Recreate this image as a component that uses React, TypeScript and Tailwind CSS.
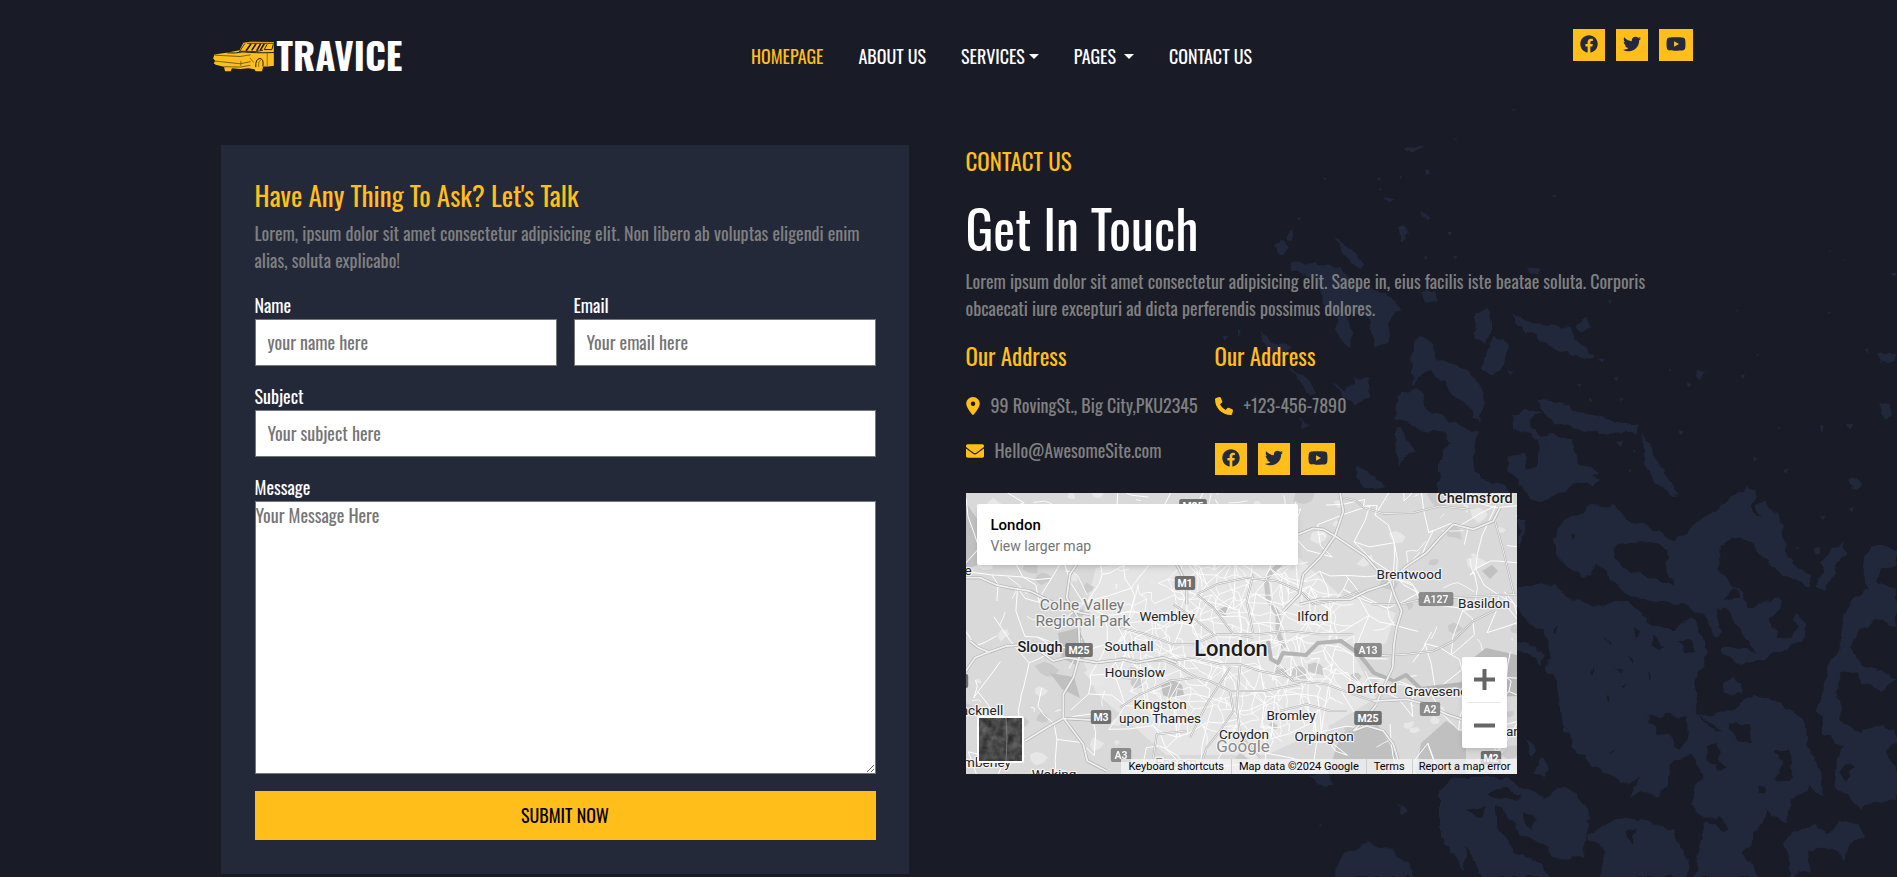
import type { ReactNode } from "react";
import { FaFacebook, FaTwitter, FaYoutube, FaEnvelope } from "react-icons/fa";
import { FaLocationDot, FaPhone } from "react-icons/fa6";

function CarLogo() {
  return (
    <svg viewBox="38 60 184 94" className="h-[31px] w-[61px] shrink-0" aria-hidden="true">
      <path
        fill="#ffbe1a"
        d="M130 65 L150 62 L222 63 V135 L205 137 L190 137 L186 152 H167 L163 146 L145 143 L120 145 L95 143 L91 152 H74 L71 138 L46 132 L40 128 L44 120 L38 113 L42 101 L78 96 L118 88 Z"
      />
      <g fill="none" stroke="#191b27" strokeLinecap="round">
        <path strokeWidth="2.5" d="M134 68 L118 92 M142 67 H222 M118 91 L168 92 L188 88" />
        <path strokeWidth="5" d="M152 70 L139 88 M167 70 L156 87 M181 70 L171 88 M192 70 L182 86" />
        <path strokeWidth="3" d="M201 71 L193 86 H216 L220 71" />
        <path strokeWidth="3" d="M82 96 Q105 98 128 93 Q165 97 222 95" />
        <path strokeWidth="1.8" d="M44 103 L120 107 L150 102 M45 121 L120 129 L150 123 M72 138 L120 139 L150 134" />
        <path strokeWidth="3" d="M167 138 Q166 114 180 113 Q192 114 189 136" />
        <path strokeWidth="1.5" d="M176 137 Q174 121 181 119 M202 98 V134 M150 112 L160 124 M122 121 V134" />
      </g>
    </svg>
  );
}

function Caret({ className = "" }: { className?: string }) {
  return (
    <svg viewBox="0 0 10 5" className={`h-[5px] w-[10px] ${className}`} aria-hidden="true">
      <path d="M0 0H10L5 5Z" fill="currentColor" />
    </svg>
  );
}

function SocialLinks() {
  const box = "flex h-8 items-center bg-[#ffbe1a] px-[7px] pb-[2px] text-[#242a3b]";
  return (
    <div className="flex gap-[11px]">
      <a href="#facebook" aria-label="Facebook" className={box}>
        <FaFacebook className="h-[18px] w-[18px]" />
      </a>
      <a href="#twitter" aria-label="Twitter" className={box}>
        <FaTwitter className="h-[18px] w-[18px]" />
      </a>
      <a href="#youtube" aria-label="YouTube" className={box}>
        <FaYoutube className="h-[18px] w-[20px]" />
      </a>
    </div>
  );
}

function Header() {
  const link = "flex items-center text-white";
  return (
    <header className="mx-auto grid w-full max-w-[1488px] grid-cols-[11fr_auto_9fr] items-start pt-[29px] pl-2">
      <a href="#home" className="flex h-[54px] items-center text-white">
        <CarLogo />
        <span className="ml-[3px] pb-1 text-[37px] leading-none font-bold">TRAVICE</span>
      </a>
      <nav className="mt-[14px] flex gap-[35px] text-[18px] leading-[27px]">
        <a href="#home" className="flex items-center text-[#ffbe1a]">HOMEPAGE</a>
        <a href="#about" className={link}>ABOUT US</a>
        <a href="#services" className={link}>
          SERVICES <Caret className="ml-1" />
        </a>
        <a href="#pages" className={link}>
          PAGES <Caret className="ml-2" />
        </a>
        <a href="#contact" className={link}>CONTACT US</a>
      </nav>
      <div className="flex justify-end">
        <SocialLinks />
      </div>
    </header>
  );
}

function Splatter() {
  return (
    <svg
      viewBox="0 0 697 877"
      className="pointer-events-none absolute top-0 right-0 h-[877px] w-[697px]"
      aria-hidden="true"
    >
      <defs>
        <filter id="rough" x="-5%" y="-5%" width="110%" height="110%" colorInterpolationFilters="sRGB">
          <feTurbulence type="fractalNoise" baseFrequency="0.08" numOctaves="2" seed="4" result="n" />
          <feDisplacementMap in="SourceGraphic" in2="n" scale="10" xChannelSelector="R" yChannelSelector="G" />
        </filter>
      </defs>
      <g filter="url(#rough)">
        <g transform="translate(0 100) scale(.4444 .4955)" fill="#21283b">
          <path d="M300 278L340 300L368 330L362 342L330 322Z M205 325L260 330L320 335L345 370L400 385L440 400L450 425L425 450L428 490L395 500L375 440L330 420L340 470L345 500L320 490L300 430L270 400L265 360L210 345Z M168 295L182 282L200 298L184 314Z M195 265L208 258L210 280L196 284Z M445 262L458 254L470 272L458 286Z M495 222L518 236L510 243Z M495 386L530 385L535 405L508 412Z M455 98L500 94L490 102L465 104Z M415 196L434 200L424 208Z M133 468L160 485L205 500L170 522L150 500Z M205 540L250 570L262 596L240 590Z M300 570L330 590L345 560L385 560L380 600L350 615L318 595Z M225 640L250 655L235 662Z M622 430L650 418L660 470L640 490L618 480Z M640 520L665 480L690 490L688 530L660 555L636 545Z M475 520L495 475L520 490L530 525L580 535L620 560L645 590L630 655L605 620L580 600L545 570L515 545L490 560L480 580Z M445 600L490 580L510 620L560 650L625 670L615 740L650 790H530L550 740L570 700L545 670L480 660L440 640Z M445 660L470 690L490 710L445 735Z M350 735L420 780L370 790Z" />
          <path d="M705 432L760 450L830 460L845 485L890 515L885 525L820 510L770 485L720 458Z M845 455L870 442L880 458L860 468Z M700 640L730 622L765 630L745 655L770 680L800 675L835 690L850 735L900 750L880 768L830 765L790 795L760 810L730 780L690 745L695 715L725 710L740 745L770 740L765 705L740 665L705 660Z M760 605L800 608L850 630L905 640L985 655L980 675L900 672L850 665L800 650L765 625Z M1000 675L1030 735L1080 800L1030 770L1000 720Z M1115 545L1140 550L1130 565L1118 560Z M1095 572l14 3-8 6z M1460 770l20-5 10 15-22 4z M1520 512l40 5-5 15-20-4z M1530 615l20-5 8 30-14 4z" />
          <path d="M250 1365L290 1350L300 1380L285 1388Z M440 1425l25 5-10 12z M300 1568L320 1525L370 1500L420 1510L470 1540L480 1568Z" />
        </g>
        <g transform="translate(240 440) scale(.3333)" fill="#21283b">
          <path d="M345 290L370 240L430 215L450 195L520 200L550 235L640 265L700 300L740 280L780 240L830 210L920 135L950 170L935 210L960 240L950 200L980 180L1030 260L1035 330L1060 370L1110 400L1110 440L1050 420L990 370L940 310L900 290L840 320L835 380L860 420L910 460L920 500L970 480L1020 475L1020 515L985 535L1020 600L1055 590L1080 560L1050 540L1065 520L1105 555L1100 590L1040 630L960 660L900 675L840 640L840 620L880 620L950 635L900 575L870 520L830 500L850 580L825 590L800 540L750 495L690 490L610 480L540 450L500 400L470 370L440 410L400 390L345 350Z" />
          <path d="M232 440L300 428L350 445L390 475L470 500L560 485L610 520L630 555L700 570L750 530L800 610L795 660L760 730L770 830L880 810L940 760L1020 790L1080 830L1105 870L1110 930L1145 1000L1150 1070L1110 1040L1050 1080L1040 1150L1000 1130L975 1090L985 1110L940 1195L910 1240L960 1311H760L780 1220L800 1140L850 1175L870 1160L820 1130L780 1130L750 1090L755 1050L790 1010L760 950L700 960L690 1000L660 1070L610 1050L570 1080L600 1010L560 1040L520 1010L470 980L410 940L370 870L355 740L320 690L330 640L310 570L270 550L240 520Z" />
          <path d="M0 1050L40 1010L200 1010L240 1040L310 1070L370 1040L420 1070L450 1120L430 1250L370 1265L300 1210L240 1180L190 1110L160 1100L170 1160L220 1230L300 1270L330 1311H130L80 1220L70 1290L40 1240L0 1190Z M440 1190L500 1150L560 1125L640 1150L700 1170L720 1230L750 1260L740 1311H480L490 1230Z" />
          <path d="M1290 315L1350 320L1371 330V370L1320 380L1320 420L1371 460V560L1310 540L1260 570L1230 620L1270 680L1320 690L1371 720L1320 750L1270 730L1250 690L1200 700L1190 760L1210 850L1260 880L1300 860L1371 870V900L1340 930L1371 980V1080L1300 1090L1265 1110L1220 1060L1180 1040L1190 960L1210 920L1150 880L1135 800L1160 700L1200 620L1210 540L1240 470L1285 450L1270 380Z M1170 345L1205 300L1215 340L1190 370L1180 420L1150 455L1130 440L1150 400L1145 360Z M1030 1210L1060 1170L1130 1155L1160 1180L1200 1145L1260 1150L1280 1190L1230 1215L1210 1260L1180 1230L1140 1220L1100 1240L1110 1290L1050 1311L1050 1250Z M845 735L880 705L910 730L905 765L860 760Z" />
          <path d="M232 600L280 620L315 650L305 680L270 640L232 630Z M250 890L290 930L280 950Z M280 1000L305 955L330 990L310 1010Z M232 240L260 240L232 330Z M200 60L225 40L245 90L290 80L320 0H390L410 60L390 100L440 95L480 120L460 135L400 130L340 170L290 190L240 130Z M0 30L40 0H110L70 50L90 110L180 130L230 190H120L60 140L0 100Z M610 0L630 10L660 100L715 175L650 130L615 70Z" />
        </g>
        <g transform="translate(240 440) scale(.3333)" fill="#191b27">
          <path d="M520 325L580 300L650 310L690 330L670 370L700 440L640 420L600 400L560 385L530 360Z M625 830L680 825L740 830L745 900L710 930L690 890L650 880L630 855Z M800 920L830 910L835 960L860 985L830 990L805 960Z M720 600L745 600L760 635L740 640Z M870 850L930 850L935 900L890 900Z M1000 930L1050 930L1060 990L1050 1030L1000 1020L1030 975Z M640 590L670 620L660 630L630 610Z M870 340L920 370L950 410L940 450L905 420L880 380Z M610 500L690 530L740 545L700 570L640 540Z M850 480L900 470L880 440Z M140 1060L200 1040L240 1075L190 1080Z M80 1110L130 1100L125 1130Z M250 1115L280 1130L280 1165L255 1150Z M560 1180L590 1170L575 1215Z M780 830L800 840L850 880L810 860Z M950 1040L985 1040L980 1060L960 1060Z M1200 1000l30-30 10 20-20 30z" />
          <path d="M488 595l22 18-4 6z M520 690l32 0-10 10z M540 735l24 0-14 8z M450 700l16-10-6 20z M570 650l14 14-6 4z M495 770l10 4-2 18z M625 695l8 4-4 22z M395 280l10 4-6 28z M340 570l14-14-8 20z M580 565l26 12-18 16z M515 935l8 0-4 12z M270 650l20 10-4 14z" />
        </g>
      </g>
      <g transform="translate(0 100) scale(.4444 .4955)" fill="#21283b">
        <path d="M700 18l14 1-10 3z M570 78l10-1-6 5z M505 142l10-2 2 9-8 2z M398 158l8-2 0 8z M448 154l7 0-3 6z M402 178l8 1-4 5z M792 192l12-1-7 7z M276 157l10 1-5 4z M218 238l10-1-6 6z M555 265l12 2-5 8z M504 315l9 2-6 7z M568 316l12-2-4 8z M736 338l30 2-5 12-20-3z M918 404l9 0-4 9z M1206 424l6-1-2 5z M1412 428l8 0-3 5z M1414 303l6 0-3 5z M1446 321l5 0-2 5z M1553 350l14-2-3 9z M50 476l14 1-8 9z M85 462l7 3-6 16z M690 545l16 4-8 6z M895 522l16 0-6 8z M930 560l12-1-5 9z M848 572l11 1-5 7z M945 600l9 3-7 6z M875 600l10 6-8 4z M1055 543l6 1-3 5z M1216 555l10-2-4 11z M1496 503l8-2-1 12z M1250 512l8 1-4 4z M1395 656l9 2-5 14z M1452 655l18-2-6 12z M1075 665l14 4-8 8z M1245 720l10 3-9 8z M1312 747l12-4-5 12z M1396 840l12 0-6 8z M935 690l18-2-6 12z M830 470l9 1-5 5z M962 748l9-4-2 8z M975 705l7 4-7 3z M1380 905l14-4 2 14-11 3z M1340 900l8 4-6 4z M1460 825l12-4-5 12z M270 1460l5 3-7 4z M1300 660l7 0-3 6z M120 600l8-5-4 14z" />
      </g>
    </svg>
  );
}

type FieldProps = { id: string; label: string; placeholder: string; type?: string };

function Field({ id, label, placeholder, type = "text" }: FieldProps) {
  return (
    <div className="min-w-0 flex-1">
      <label htmlFor={id} className="block text-white">{label}</label>
      <input
        id={id}
        type={type}
        placeholder={placeholder}
        className="block h-[47px] w-full border border-[#767676] bg-white px-3 pb-[2px] text-gray-900 placeholder:text-[#757575]"
      />
    </div>
  );
}

function ContactForm() {
  return (
    <form className="flex w-full flex-col gap-[17px] bg-[#24293a] pt-[33px] pr-[33px] pb-[34px] pl-[34px] text-[18px] leading-[27px] lg:w-[688px]">
      <div className="pb-px">
        <h2 className="mb-[7px] text-[27px] leading-[35px] text-[#ffbe1a]">Have Any Thing To Ask? Let's Talk</h2>
        <p className="text-[#808080]">
          Lorem, ipsum dolor sit amet consectetur adipisicing elit. Non libero ab voluptas eligendi enim alias, soluta
          explicabo!
        </p>
      </div>
      <div className="flex gap-[17px]">
        <Field id="name" label="Name" placeholder="your name here" />
        <Field id="email" label="Email" placeholder="Your email here" type="email" />
      </div>
      <div className="flex">
        <Field id="subject" label="Subject" placeholder="Your subject here" />
      </div>
      <div>
        <label htmlFor="message" className="block text-white">Message</label>
        <textarea
          id="message"
          placeholder="Your Message Here"
          className="block h-[273px] w-full resize border border-[#767676] bg-white text-gray-900 placeholder:text-[#757575]"
        />
      </div>
      <button type="submit" className="h-[49px] w-full bg-[#ffbe1a] text-black">SUBMIT NOW</button>
    </form>
  );
}

function seeded(seed: number) {
  let s = seed;
  return () => {
    s = (s * 1664525 + 1013904223) % 4294967296;
    return s / 4294967296;
  };
}

/* Jittered lattice of streets; links thin out with distance from the centre. */
function streetPath(step: number, seed: number, radius: number, base: number) {
  const rnd = seeded(seed);
  const cols = Math.ceil(551 / step) + 1;
  const rows = Math.ceil(281 / step) + 1;
  const pts: [number, number][][] = [];
  for (let r = 0; r <= rows; r++) {
    const row: [number, number][] = [];
    for (let c = 0; c <= cols; c++) {
      row.push([c * step + (rnd() - 0.5) * step * 1.1, r * step + (rnd() - 0.5) * step * 1.1]);
    }
    pts.push(row);
  }
  let d = "";
  const link = (a: [number, number], b: [number, number]) => {
    const dist = Math.hypot((a[0] - 265) / 1.25, a[1] - 150);
    const chance = dist < radius ? 0.85 : base;
    const bend = (rnd() - 0.5) * step * 0.4;
    if (rnd() < chance) {
      const mx = (a[0] + b[0]) / 2 + bend;
      const my = (a[1] + b[1]) / 2 - bend;
      d += `M${a[0].toFixed(1)} ${a[1].toFixed(1)}L${mx.toFixed(1)} ${my.toFixed(1)}L${b[0].toFixed(1)} ${b[1].toFixed(1)}`;
    }
  };
  for (let r = 0; r < rows; r++) {
    for (let c = 0; c < cols; c++) {
      link(pts[r][c], pts[r][c + 1]);
      link(pts[r][c], pts[r + 1][c]);
      if (rnd() < 0.25) link(pts[r][c], pts[r + 1][c + 1]);
    }
  }
  return d;
}

function patches(seed: number, count: number, size: number) {
  const rnd = seeded(seed);
  let d = "";
  for (let i = 0; i < count; i++) {
    const x = rnd() * 551;
    const y = rnd() * 281;
    const s = size * (0.4 + rnd());
    for (let k = 0; k < 7; k++) {
      const a = (k / 7) * Math.PI * 2;
      const q = s * (0.5 + rnd() * 0.6);
      d += `${k ? "L" : "M"}${(x + Math.cos(a) * q).toFixed(1)} ${(y + Math.sin(a) * q * 0.8).toFixed(1)}`;
    }
    d += "Z";
  }
  return d;
}

const STREETS = streetPath(26, 11, 125, 0.45);
const CITY_STREETS = streetPath(12, 5, 96, 0.03);
const DARK_PATCHES = patches(31, 36, 10);
const LIGHT_PATCHES = patches(8, 70, 8);

const WEST_ROADS =
  "M48 290L90 290L140 312L190 322L240 330L300 360L390 395L420 400 M48 570L75 530L120 512L170 495L240 490L310 540L350 530L440 545L520 535L560 545L640 530L680 545 M380 250L360 280L350 350L385 410L390 520L370 590L340 640L340 710L370 750L400 790L412 840L470 870 M60 480L85 500L120 515 M225 780L290 740L340 712L390 715L480 720 M680 250L710 310L710 370";
const EAST_ROADS =
  "M300 36L310 90L285 165L240 230L190 280L178 340L130 390 M175 160L220 142L250 145L285 165L330 195L375 225L410 265L450 300L465 345L485 390L470 440L462 490L458 560L430 620L410 665 M178 370L240 355L330 355L380 330L440 310L500 255L560 215L600 170L640 130L700 145L760 120L780 80 M400 660L500 655L560 670L620 700L665 715 M340 750L380 735L430 750L460 790L475 840 M340 750L370 720L410 670";
const EAST_MINOR =
  "M310 50L350 60L370 80L430 98L520 95L600 75L690 85 M765 120L790 210L822 340 M395 370L480 370L560 352L640 350L830 340 M400 525L500 520L580 510L640 480L700 420L780 380 M110 560L160 600L260 610L340 640L400 660 M120 690L200 670L270 690L320 690";
const CENTRE_ROADS =
  "M0 410L80 430L160 460L220 460L290 430L350 430L420 430L500 420L600 430L700 430 M230 310L290 280L380 260L470 270L540 300 M0 500L60 510L150 510L220 500L300 520L360 520L420 540L520 560 M110 500L160 520L230 560L270 570L330 600L430 600L540 580 M160 340L220 380L280 430 M230 310L280 350L340 430L400 440 M400 250L380 330L400 430 M330 600L340 660L300 720L260 770L240 830 M210 740L260 640L330 530 M100 800L110 730L200 720 M360 520L350 640L360 730L420 800 M540 300L580 340L640 330L720 300 M0 650L60 610L150 570L220 560";

type RoadProps = { d: string; transform: string; minor?: boolean };

function Road({ d, transform, minor = false }: RoadProps) {
  return (
    <g transform={transform} fill="none" strokeLinejoin="round">
      <path d={d} stroke="#b2b2b2" strokeWidth={minor ? 6 : 9.5} />
      <path d={d} stroke="#efefef" strokeWidth={minor ? 3 : 5.5} />
    </g>
  );
}

type Label = [text: string, x: number, y: number];
const TOWNS: Label[] = [
  ["Wembley", 201, 128],
  ["Southall", 163, 158],
  ["Hounslow", 169, 184],
  ["Kingston", 194, 216],
  ["upon Thames", 194, 230],
  ["Croydon", 278, 246],
  ["Bromley", 325, 227],
  ["Orpington", 358, 248],
  ["Dartford", 406, 200],
  ["Gravesend", 470, 203],
  ["Ilford", 347, 128],
  ["Brentwood", 443, 86],
  ["Basildon", 518, 115],
  ["Woking", 88, 286],
  ["acknell", 16, 222],
  ["mberley", 21, 274],
  ["e", 2, 82],
  ["ar", 546, 243],
];
const SHIELDS: [text: string, x: number, y: number, light?: boolean][] = [
  ["M25", 227, 13],
  ["M1", 219, 90],
  ["M25", 113, 157],
  ["M3", 135, 224],
  ["A3", 155, 262, true],
  ["A127", 470, 106, true],
  ["A13", 402, 157, true],
  ["A2", 464, 216, true],
  ["M25", 402, 225],
  ["M2", 525, 265],
  ["M4", -8, 188],
];

function LondonMap() {
  return (
    <svg
      viewBox="0 0 551 281"
      preserveAspectRatio="xMidYMid slice"
      className="h-full w-full font-['Roboto',sans-serif]"
      role="img"
      aria-label="Map of London"
    >
      <rect width="551" height="281" fill="#d9d9d9" />
      <path d="M130 75L190 62L330 62L372 100L430 120L420 150L390 165L410 205L360 235L300 262L200 262L130 200L110 150Z" fill="#e5e5e5" />
      <path d={DARK_PATCHES} fill="#cacaca" />
      <path d={LIGHT_PATCHES} fill="#e7e7e7" />
      <path d="M0 10L14 30L12 72L0 76Z M92 140L112 135L124 160L110 172L96 165Z M195 192L205 186L216 192L218 202L206 206L197 202Z M375 240L412 232L430 262L425 281H362Z M455 250L480 228L500 240V281H450Z M84 180L108 184L114 205L96 196Z M250 118L262 112L260 124Z M516 78L526 72L532 78L524 86Z" fill="#c0c0c0" />
      <path d="M498 200L490 195L520 163L551 165V203L500 205Z M498 172L520 155L551 162V178Z" fill="#b9b9b9" />
      <path d="M320 65L300 85L302 105L312 122L312 140L318 155" fill="none" stroke="#c6c6c6" strokeWidth="5" />
      <g fill="none" stroke="#fff">
        <path d={STREETS} strokeWidth="1" />
        <path d={CITY_STREETS} strokeWidth=".8" />
      </g>
      <path d="M302 148L305 166L312 170L317 160L340 162L352 150L375 148L392 160L408 180L428 188L440 182L455 196L480 193L505 190" fill="none" stroke="#b4b4b4" strokeWidth="4" strokeLinejoin="round" />
      <Road d={CENTRE_ROADS} transform="translate(154 -2) scale(.3333)" minor />
      <Road d={EAST_MINOR} transform="translate(274 -12) scale(.3333)" minor />
      <Road d={WEST_ROADS} transform="translate(-16 -12) scale(.3333)" />
      <Road d={EAST_ROADS} transform="translate(274 -12) scale(.3333)" />
      {SHIELDS.map(([text, x, y, light], i) => (
        <g key={i} opacity={light ? 0.75 : 1}>
          <rect x={x - 3 - text.length * 3.6} y={y - 7} width={6 + text.length * 7.2} height="14" rx="2" fill="#707070" />
          <text x={x} y={y + 4} textAnchor="middle" fontSize="10.5" fontWeight="700" fill="#fff">{text}</text>
        </g>
      ))}
      <g textAnchor="middle" stroke="#f3f3f3" strokeWidth="2.5" strokeLinejoin="round" paintOrder="stroke">
        <g fontSize="15.5" fill="#757575">
          <text x="116" y="117">Colne Valley</text>
          <text x="117" y="133">Regional Park</text>
        </g>
        <g fontSize="13.5" fill="#222">
          {TOWNS.map(([text, x, y]) => (
            <text key={text} x={x} y={y}>{text}</text>
          ))}
          <text x="210" y="274" fillOpacity=".5">Epsom</text>
        </g>
        <g fill="#1c1c1c" fontWeight="500">
          <text x="74" y="159" fontSize="14.5">Slough</text>
          <text x="509" y="10" fontSize="14.5">Chelmsford</text>
          <text x="265" y="163" fontSize="22">London</text>
        </g>
        <text x="277" y="259" fontSize="17" fill="#8a8a8a">Google</text>
      </g>
    </svg>
  );
}

function MapCard() {
  return (
    <div className="relative h-[281px] w-full max-w-[551px] overflow-hidden bg-[#dadada] font-['Roboto',sans-serif]">
      <LondonMap />
      <div className="absolute top-[11px] left-[11px] h-[61px] w-[321px] rounded-[2px] bg-white px-[14px] pt-3 shadow-md">
        <div className="text-[15px] leading-[19px] font-medium text-black">London</div>
        <a href="#map" className="block text-[14px] leading-[22px] text-[#757575]">View larger map</a>
      </div>
      <button
        type="button"
        aria-label="Show satellite imagery"
        className="absolute top-[223px] left-[11px] h-[47px] w-[47px] overflow-hidden rounded-[2px] border-2 border-white bg-[#444]"
      >
        <svg viewBox="0 0 43 43" className="h-full w-full" aria-hidden="true">
          <filter id="terrain" colorInterpolationFilters="sRGB">
            <feTurbulence type="fractalNoise" baseFrequency=".12" numOctaves="3" seed="3" />
            <feColorMatrix values=".35 0 0 0 .1 .35 0 0 0 .1 .35 0 0 0 .1 0 0 0 0 1" />
          </filter>
          <rect width="43" height="43" filter="url(#terrain)" />
          <path d="M27 0L28 20L27 43" stroke="#7a7a7a" fill="none" />
        </svg>
      </button>
      <div className="absolute top-[164px] right-[10px] flex h-[91px] w-[45px] flex-col items-center rounded-[2px] bg-white shadow-md">
        <button type="button" aria-label="Zoom in" className="flex w-full flex-1 items-center justify-center">
          <svg viewBox="0 0 21 21" className="h-[21px] w-[21px]"><path d="M0 8.5h21v4H0z M8.5 0h4v21h-4z" fill="#666" /></svg>
        </button>
        <div className="h-px w-[34px] bg-[#e6e6e6]" />
        <button type="button" aria-label="Zoom out" className="flex w-full flex-1 items-center justify-center">
          <svg viewBox="0 0 21 21" className="h-[21px] w-[21px]"><path d="M0 8.5h21v4H0z" fill="#666" /></svg>
        </button>
      </div>
      <div className="absolute right-0 bottom-0 flex h-[15px] divide-x divide-[#ccc] bg-[#f5f5f5]/75 text-[11px] leading-[15px] text-black">
        <button type="button" className="px-[7px]">Keyboard shortcuts</button>
        <span className="px-[7px]">Map data ©2024 Google</span>
        <a href="#terms" className="px-[7px]">Terms</a>
        <a href="#report" className="px-[6px]">Report a map error</a>
      </div>
    </div>
  );
}

function Detail({ icon, children }: { icon: ReactNode; children: ReactNode }) {
  return (
    <div className="flex h-[27px] items-center gap-[11px] whitespace-nowrap text-[#808080]">
      <span className="text-[18px] text-[#ffbe1a]">{icon}</span>
      {children}
    </div>
  );
}

function ContactInfo() {
  return (
    <section className="min-w-0 flex-1 text-[18px] leading-[27px]">
      <h3 className="pt-px text-[23px] leading-[30px] text-[#ffbe1a]">CONTACT US</h3>
      <h1 className="mt-[21px] text-[52px] leading-[62px] text-white">Get In Touch</h1>
      <p className="mt-[9px] max-w-[700px] text-[#808080]">
        Lorem ipsum dolor sit amet consectetur adipisicing elit. Saepe in, eius facilis iste beatae soluta. Corporis
        obcaecati iure excepturi ad dicta perferendis possimus dolores.
      </p>
      <div className="mt-[19px] grid grid-cols-[249px_auto] justify-start">
        <div>
          <h4 className="text-[23px] leading-[30px] text-[#ffbe1a]">Our Address</h4>
          <div className="mt-[21px] flex flex-col gap-[18px]">
            <Detail icon={<FaLocationDot className="h-[18px] w-[14px]" />}>99 RovingSt., Big City,PKU2345</Detail>
            <Detail icon={<FaEnvelope />}>Hello@AwesomeSite.com</Detail>
          </div>
        </div>
        <div>
          <h4 className="text-[23px] leading-[30px] text-[#ffbe1a]">Our Address</h4>
          <div className="mt-[21px] flex flex-col gap-6">
            <Detail icon={<FaPhone />}>+123-456-7890</Detail>
            <SocialLinks />
          </div>
        </div>
      </div>
      <div className="mt-[18px]">
        <MapCard />
      </div>
    </section>
  );
}

export default function App() {
  return (
    <div className="relative min-h-screen overflow-hidden bg-[#191b27] font-['Oswald','Roboto_Condensed','Liberation_Sans',sans-serif]">
      <Splatter />
      <div className="relative">
        <Header />
        <main className="mx-auto mt-[62px] flex w-full max-w-[1456px] flex-col gap-[57px] lg:flex-row">
          <ContactForm />
          <ContactInfo />
        </main>
      </div>
    </div>
  );
}
